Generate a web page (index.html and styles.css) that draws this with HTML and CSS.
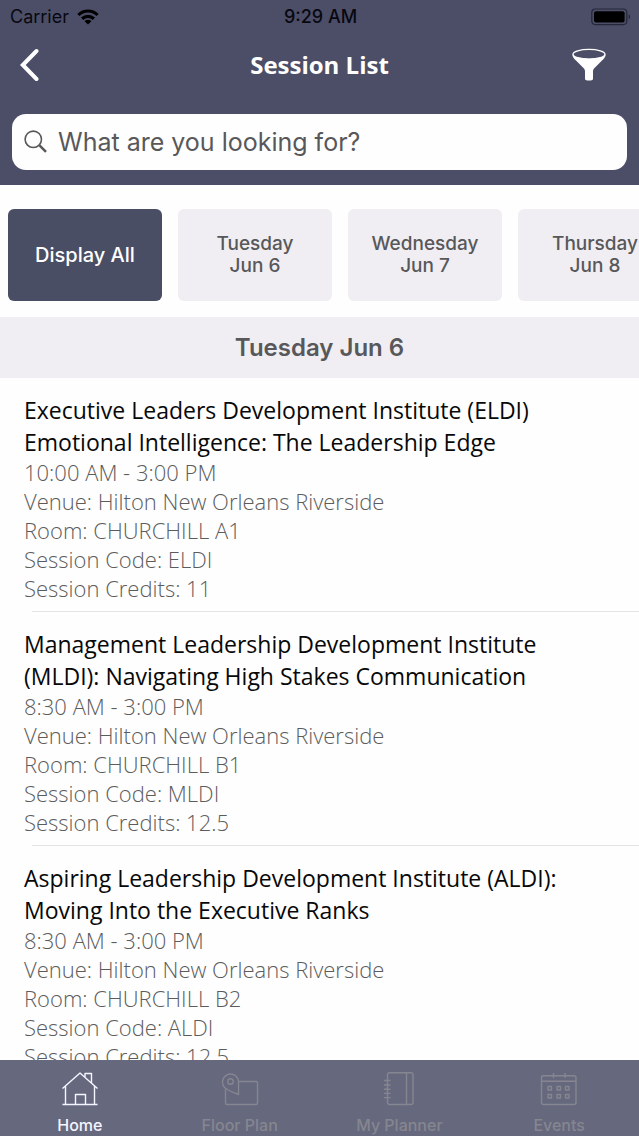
FILE: index.html
```html
<!DOCTYPE html>
<html lang="en">
<head>
<meta charset="utf-8">
<meta name="viewport" content="width=device-width, initial-scale=1">
<title>Session List</title>
<link rel="stylesheet" href="styles.css">
</head>
<body>
<div class="app">
  <header class="top">
    <div class="status">
      <div class="status-left">
        <span>Carrier</span>
        <svg class="wifi" viewBox="0 0 22 16" aria-hidden="true">
          <path d="M0.3 4.9A15.2 15.2 0 0 1 21.7 4.9L19.5 7.1A12 12 0 0 0 2.5 7.1Z"/>
          <path d="M4 8.6A9.9 9.9 0 0 1 18 8.6L15.7 10.9A6.7 6.7 0 0 0 6.3 10.9Z"/>
          <path d="M7.6 12.2A4.8 4.8 0 0 1 14.4 12.2L11 15.6Z"/>
        </svg>
      </div>
      <span class="clock">9:29 AM</span>
      <svg class="battery" viewBox="0 0 40 18" aria-hidden="true">
        <rect x="0.8" y="1" width="35" height="15.6" rx="3.5" fill="none" stroke="#24263a" stroke-width="1.2"/>
        <rect x="3" y="3.2" width="30.6" height="11.2" rx="2"/>
        <path d="M37.7 6.2V11.4C39.6 10.4 39.6 7.2 37.7 6.2Z" fill="#24263a"/>
      </svg>
    </div>
    <nav class="bar">
      <button class="icon-btn" type="button" aria-label="Back">
        <svg class="back" viewBox="0 0 20 34"><path d="M17.500 3L3.800 17L17.500 31"/></svg>
      </button>
      <h1 class="title">Session List</h1>
      <button class="icon-btn icon-end" type="button" aria-label="Filter">
        <svg class="funnel" viewBox="0 0 34 34">
          <ellipse cx="17" cy="6.300" rx="16" ry="4.900" fill="none" stroke="#fff" stroke-width="1.4"/>
          <path d="M0.400 6.500C1 12 33 12 33.600 6.500C33.600 9 32 10.600 30 12.600L22.500 20C21.400 21.200 21 22 21 23.500V31C21 33 13 33 13 31V23.500C13 22 12.600 21.200 11.500 20L4 12.600C2 10.600 0.400 9 0.400 6.500Z" fill="#fff"/>
        </svg>
      </button>
    </nav>
    <label class="search">
      <svg class="lens" viewBox="0 0 24 24" aria-hidden="true"><circle cx="9.3" cy="9.3" r="8.2" stroke-width="1.6"/><path d="M15.500 15.300L22 21.800" stroke-width="2.4"/></svg>
      <input class="search-input" type="text" placeholder="What are you looking for?" aria-label="Search sessions">
    </label>
  </header>

  <div class="days">
    <button class="day day-active" type="button">Display All</button>
    <button class="day" type="button">Tuesday<br>Jun 6</button>
    <button class="day" type="button">Wednesday<br>Jun 7</button>
    <button class="day" type="button">Thursday<br>Jun 8</button>
  </div>

  <h2 class="date">Tuesday Jun 6</h2>

  <main class="list">
    <article class="session">
      <h3 class="name">Executive Leaders Development Institute (ELDI) Emotional Intelligence: The Leadership Edge</h3>
      <p class="line">10:00 AM - 3:00 PM</p>
      <p class="line">Venue: Hilton New Orleans Riverside</p>
      <p class="line">Room: CHURCHILL A1</p>
      <p class="line">Session Code: ELDI</p>
      <p class="line">Session Credits: 11</p>
    </article>
    <article class="session">
      <h3 class="name">Management Leadership Development Institute (MLDI): Navigating High Stakes Communication</h3>
      <p class="line">8:30 AM - 3:00 PM</p>
      <p class="line">Venue: Hilton New Orleans Riverside</p>
      <p class="line">Room: CHURCHILL B1</p>
      <p class="line">Session Code: MLDI</p>
      <p class="line">Session Credits: 12.5</p>
    </article>
    <article class="session">
      <h3 class="name">Aspiring Leadership Development Institute (ALDI): Moving Into the Executive Ranks</h3>
      <p class="line">8:30 AM - 3:00 PM</p>
      <p class="line">Venue: Hilton New Orleans Riverside</p>
      <p class="line">Room: CHURCHILL B2</p>
      <p class="line">Session Code: ALDI</p>
      <p class="line">Session Credits: 12.5</p>
    </article>
  </main>

  <nav class="tabs">
    <a class="tab tab-active" href="#home">
      <svg class="tab-icon" viewBox="0 0 40 36"><path d="M2.5 17.5L20 2L37.5 17.5M5.5 15V33.5M34.5 15V33.5M2.5 33.5H37.5M15.5 33.5V23.5H25.5V33.5M25 6V2.5H31.5V12"/></svg>
      <span>Home</span>
    </a>
    <a class="tab" href="#floor-plan">
      <svg class="tab-icon" viewBox="0 0 40 36"><path d="M18.500 10.500H36Q37.500 10.500 37.500 12V32Q37.500 33.500 36 33.500H7Q5.500 33.500 5.500 32V18.500M18.500 23.500V10.500A8 8 0 1 0 6.500 18Q11 21 18.500 23.500Z"/><circle cx="10.500" cy="10.500" r="2.800"/></svg>
      <span>Floor Plan</span>
    </a>
    <a class="tab" href="#planner">
      <svg class="tab-icon" viewBox="0 0 40 36"><rect x="8.500" y="1.800" width="25.500" height="31.700" rx="2"/><path d="M27.500 2V33.500M5 9.500H11.500M5 14H11.500M5 18.200H11.500M5 22.400H11.500M5 26.600H11.500"/></svg>
      <span>My Planner</span>
    </a>
    <a class="tab" href="#events">
      <svg class="tab-icon" viewBox="0 0 40 36"><rect x="2.500" y="4.800" width="34.500" height="28.700" rx="2"/><path d="M2.500 10.300H37M14.500 2V7M26 2V7M9 15.500h3.500v3.500h-3.500zM18 15.500h3.500v3.500h-3.500zM26.500 15.500h3.500v3.500h-3.500zM9 23.500h3.500v3.500h-3.500zM18 23.500h3.500v3.500h-3.500zM26.500 23.500h3.500v3.500h-3.500z"/></svg>
      <span>Events</span>
    </a>
  </nav>
</div>
</body>
</html>
```

FILE: styles.css
```css
* {
  box-sizing: border-box;
}

body {
  margin: 0;
  background: #fefefe;
  font-family: "Open Sans", "Noto Sans", sans-serif;
}

h1, h2, h3, p {
  margin: 0;
}

button {
  border: 0;
  padding: 0;
  background: none;
  font: inherit;
}

.app {
  display: flex;
  flex-direction: column;
  height: 100vh;
}

.top {
  flex: none;
  padding-bottom: 15px;
  background: #4c4e67;
}

.status {
  display: grid;
  grid-template-columns: 1fr auto 1fr;
  align-items: center;
  height: 33px;
  padding: 0 8px 0 10px;
  color: #080810;
  font-family: Inter, sans-serif;
  font-size: 18px;
}

.status-left {
  display: flex;
  align-items: center;
  gap: 8px;
}

.wifi {
  width: 22px;
  height: 16px;
}

.clock {
  font-weight: 500;
}

.battery {
  justify-self: end;
  width: 40px;
  height: 18px;
}

.bar {
  display: grid;
  grid-template-columns: 1fr auto 1fr;
  align-items: center;
  height: 64px;
  padding: 0 19px;
}

.icon-btn {
  display: flex;
}

.icon-end {
  justify-self: end;
  margin-right: 14px;
}

.back {
  width: 20px;
  height: 34px;
  fill: none;
  stroke: #fff;
  stroke-width: 4;
  stroke-linecap: round;
  stroke-linejoin: miter;
}

.funnel {
  width: 34px;
  height: 34px;
}

.title {
  color: #fff;
  font-size: 24px;
  font-weight: 700;
  line-height: 32px;
}

.search {
  display: flex;
  align-items: center;
  gap: 10px;
  height: 56px;
  margin: 17px 12px 0;
  padding: 0 12px;
  border-radius: 14px;
  background: #fefefe;
}

.lens {
  flex: none;
  width: 24px;
  height: 24px;
  fill: none;
  stroke: #58585a;
}

.search-input {
  flex: 1;
  min-width: 0;
  height: 100%;
  padding: 0;
  border: 0;
  outline: 0;
  background: none;
  color: #555;
  font-family: Inter, sans-serif;
  font-size: 25px;
}

.search-input::placeholder {
  color: #58585a;
  opacity: 1;
}

.days {
  display: flex;
  flex: none;
  gap: 16px;
  padding: 24px 8px 16px;
  overflow-x: auto;
  scrollbar-width: none;
}

.day {
  flex: none;
  width: 154px;
  height: 92px;
  border-radius: 6px;
  background: #f0eef3;
  color: #58585a;
  font-family: Inter, sans-serif;
  font-size: 19px;
  font-weight: 500;
  line-height: 22px;
}

.day-active {
  background: #4a4e65;
  color: #fff;
  font-size: 20px;
}

.date {
  flex: none;
  background: #f0eef3;
  color: #58585a;
  font-family: Inter, sans-serif;
  font-size: 24px;
  font-weight: 600;
  line-height: 61px;
  text-align: center;
}

.list {
  flex: 1;
  min-height: 0;
  overflow-y: auto;
  scrollbar-width: none;
}

.session {
  padding: 16px 0 0 24px;
}

.session::after {
  display: block;
  height: 1px;
  margin: 8px 0 0 8px;
  background: #e4e4e6;
  content: "";
}

.name {
  padding-right: 60px;
  color: #080808;
  font-size: 23px;
  font-weight: 400;
  line-height: 32px;
}

.line {
  color: #5c5c5c;
  font-size: 22px;
  font-weight: 300;
  line-height: 29px;
}

.tabs {
  display: grid;
  flex: none;
  grid-template-columns: repeat(4, 1fr);
  height: 76px;
  padding-top: 11px;
  background: #66687e;
}

.tab {
  display: flex;
  flex-direction: column;
  align-items: center;
  gap: 8px;
  color: #85868f;
  font-family: Inter, sans-serif;
  font-size: 16px;
  font-weight: 500;
  line-height: 20px;
  text-decoration: none;
}

.tab-active {
  color: #f4f5ff;
}

.tab-icon {
  width: 40px;
  height: 36px;
  fill: none;
  stroke: currentColor;
  stroke-width: 1.4;
  stroke-linejoin: round;
}
```
